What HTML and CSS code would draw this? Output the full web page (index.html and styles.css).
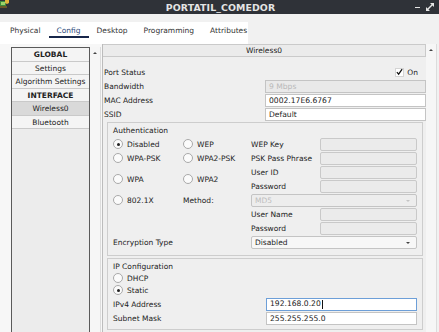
FILE: index.html
```html
<!DOCTYPE html>
<html lang="en">
<head>
    <meta charset="UTF-8">
    <meta name="viewport" content="width=device-width, initial-scale=1.0">
    <title>PORTATIL_COMEDOR</title>
    <link rel="stylesheet" href="styles.css">
</head>
<body>
    <div class="titlebar">
        <svg class="app-icon" width="9" height="9" viewBox="0 0 9 9">
            <rect x="0" y="1" width="6" height="5" fill="#3d8b3d"/>
            <rect x="1" y="2" width="4" height="3" fill="#9bd36a"/>
            <path d="M5 0 L9 0 L9 3 L7 4 L5 3 Z" fill="#e0b53a"/>
            <rect x="0" y="6" width="7" height="2" fill="#6b5a2a"/>
        </svg>
        <div class="title">PORTATIL_COMEDOR</div>
        <div class="win-controls">
            <span class="minimize"></span>
            <svg width="8" height="8" viewBox="0 0 8 8">
                <path d="M4 0 H8 V4 L6.5 2.5 L2.5 6.5 L4 8 H0 V4 L1.5 5.5 L5.5 1.5 Z" fill="#e6e6e6"/>
            </svg>
        </div>
    </div>
    <div class="tabbar">
        <div class="tabs">
            <span class="tab">Physical</span>
            <span class="tab active">Config</span>
            <span class="tab">Desktop</span>
            <span class="tab">Programming</span>
            <span class="tab">Attributes</span>
        </div>
    </div>
    <div class="main">
        <div class="sidebar">
            <div class="side-list">
                <div class="side-item heading">GLOBAL</div>
                <div class="side-item">Settings</div>
                <div class="side-item">Algorithm Settings</div>
                <div class="side-item heading">INTERFACE</div>
                <div class="side-item selected">Wireless0</div>
                <div class="side-item">Bluetooth</div>
            </div>
            <div class="scrollbar"><span class="arrow-up"></span></div>
        </div>
        <div class="content">
            <div class="panel">
                <div class="panel-header">Wireless0</div>
                <div class="panel-body">
                    <div class="form-row">
                        <span class="label">Port Status</span>
                        <span class="port-on">
                            <span class="checkbox">
                                <svg width="8" height="8" viewBox="0 0 8 8"><path d="M1 4.2 L3 6.5 L7 0.8" stroke="#111" stroke-width="1.4" fill="none"/></svg>
                            </span>
                            On
                        </span>
                    </div>
                    <div class="form-row">
                        <span class="label">Bandwidth</span>
                        <span class="field disabled">9 Mbps</span>
                    </div>
                    <div class="form-row">
                        <span class="label">MAC Address</span>
                        <span class="field">0002.17E6.6767</span>
                    </div>
                    <div class="form-row">
                        <span class="label">SSID</span>
                        <span class="field">Default</span>
                    </div>

                    <div class="group auth">
                        <div class="group-title">Authentication</div>
                        <div class="auth-grid">
                            <span class="radio-opt r1 c1"><span class="radio checked"></span>Disabled</span>
                            <span class="radio-opt r1 c2"><span class="radio"></span>WEP</span>
                            <span class="label r1 c3">WEP Key</span>
                            <span class="small-field r1 c4"></span>

                            <span class="radio-opt r2 c1"><span class="radio"></span>WPA-PSK</span>
                            <span class="radio-opt r2 c2"><span class="radio"></span>WPA2-PSK</span>
                            <span class="label r2 c3">PSK Pass Phrase</span>
                            <span class="small-field r2 c4"></span>

                            <span class="radio-opt r34 c1"><span class="radio"></span>WPA</span>
                            <span class="radio-opt r34 c2"><span class="radio"></span>WPA2</span>
                            <span class="label r3 c3">User ID</span>
                            <span class="small-field r3 c4"></span>
                            <span class="label r4 c3">Password</span>
                            <span class="small-field r4 c4"></span>

                            <span class="radio-opt r5 c1"><span class="radio"></span>802.1X</span>
                            <span class="label r5 c2">Method:</span>
                            <span class="select disabled r5 c34">MD5<span class="caret"></span></span>

                            <span class="label r6 c3">User Name</span>
                            <span class="small-field r6 c4"></span>
                            <span class="label r7 c3">Password</span>
                            <span class="small-field r7 c4"></span>

                            <span class="label r8 c12">Encryption Type</span>
                            <span class="select r8 c34">Disabled<span class="caret"></span></span>
                        </div>
                    </div>

                    <div class="group ipconf">
                        <div class="group-title">IP Configuration</div>
                        <div class="ip-opt"><span class="radio"></span>DHCP</div>
                        <div class="ip-opt"><span class="radio checked"></span>Static</div>
                        <div class="ip-row first">
                            <span class="label">IPv4 Address</span>
                            <span class="field focused">192.168.0.20<span class="cursor"></span></span>
                        </div>
                        <div class="ip-row">
                            <span class="label">Subnet Mask</span>
                            <span class="field">255.255.255.0</span>
                        </div>
                    </div>
                </div>
            </div>
            <div class="scrollbar"><span class="arrow-up"></span></div>
        </div>
    </div>
</body>
</html>
```

FILE: styles.css
```css
html, body {
    margin: 0;
    height: 100%;
    overflow: hidden;
}
body {
    font-family: 'DejaVu Sans', 'Noto Sans', sans-serif;
    font-size: 7.5px;
    color: #222;
    background: #f1f1f1;
}
.titlebar {
    height: 14px;
    background: #2f3238;
    display: flex;
    align-items: center;
    position: relative;
}
.app-icon {
    position: absolute;
    left: 0;
    top: 0;
}
.title {
    flex: 1;
    text-align: center;
    color: #e4e4e4;
    font-weight: bold;
    font-size: 9.4px;
    letter-spacing: 0.1px;
    padding-left: 2px;
}
.win-controls {
    position: absolute;
    right: 5px;
    top: 3px;
    display: flex;
    align-items: center;
    gap: 6px;
}
.minimize {
    width: 5px;
    height: 1px;
    background: #e6e6e6;
}
.tabbar {
    margin-top: 8px;
    height: 22px;
}
.tabs {
    width: 248px;
    height: 22px;
    background: #fff;
    display: flex;
    padding-left: 2px;
    box-sizing: border-box;
}
.tab {
    padding: 0 8px;
    height: 16px;
    line-height: 18px;
    color: #333;
}
.tab.active {
    color: #2d4b7c;
    box-shadow: inset 0 -2px 0 #17264a;
}
.main {
    display: flex;
    height: 288px;
}
.sidebar {
    width: 103px;
    display: flex;
    padding-left: 11px;
    padding-top: 3px;
    box-sizing: border-box;
    background: #f7f7f7;
}
.side-list {
    width: 79px;
    border: 1px solid #5a5a5a;
    border-bottom: none;
    background: #ececec;
    box-sizing: border-box;
}
.side-item {
    height: 13.5px;
    line-height: 13px;
    text-align: center;
    background: #f4f4f4;
    border-bottom: 1px solid #c9c9c9;
    box-sizing: border-box;
}
.side-item.heading {
    font-weight: bold;
}
.side-item.selected {
    background: #d9d9d9;
}
.scrollbar {
    width: 10px;
    background: #f6f6f6;
    border-right: 1px solid #dcdcdc;
    position: relative;
}
.arrow-up {
    position: absolute;
    left: 3px;
    top: 5px;
    border-left: 2px solid transparent;
    border-right: 2px solid transparent;
    border-bottom: 2px solid #444;
}
.content {
    flex: 1;
    display: flex;
    padding-right: 2px;
}
.panel {
    width: 323px;
    border-left: 1px solid #bcbcbc;
    background: #efefef;
}
.panel-header {
    height: 11px;
    line-height: 11px;
    text-align: center;
    background: #ebebeb;
    border: 1px solid #cacaca;
    border-left: none;
}
.panel-body {
    padding: 8px 0 0 1px;
}
.form-row {
    display: grid;
    grid-template-columns: 161px 161px;
    height: 14px;
    align-items: center;
}
.field {
    height: 13px;
    line-height: 12px;
    box-sizing: border-box;
    background: #fff;
    border: 1px solid #c4c4c4;
    padding-left: 3px;
    font-size: 7.6px;
}
.field.disabled {
    background: #e9e9e9;
    color: #b9b9b9;
}
.field.focused {
    border-color: #6d9fd8;
    display: flex;
    align-items: center;
}
.cursor {
    width: 1px;
    height: 9px;
    background: #111;
    margin-left: 1px;
}
.port-on {
    display: flex;
    justify-content: flex-end;
    align-items: center;
    gap: 3px;
    padding-right: 8px;
}
.checkbox {
    width: 9px;
    height: 9px;
    box-sizing: border-box;
    border: 1px solid #d4d4d4;
    background: #fff;
    display: flex;
    align-items: center;
    justify-content: center;
}
.group {
    margin: 1px 3px 0 3px;
    border: 1px solid #cdcdcd;
    width: 316px;
    box-sizing: border-box;
    padding: 3px 5px 0 5px;
}
.group-title {
    height: 11px;
    line-height: 10px;
}
.auth {
    height: 134px;
}
.auth-grid {
    display: grid;
    grid-template-columns: 70px 68px 69px 97px;
    grid-template-rows: repeat(8, 14px);
    align-items: center;
}
.r1 { grid-row: 1; }
.r2 { grid-row: 2; }
.r3 { grid-row: 3; }
.r4 { grid-row: 4; }
.r34 { grid-row: 3 / 5; }
.r5 { grid-row: 5; }
.r6 { grid-row: 6; }
.r7 { grid-row: 7; }
.r8 { grid-row: 8; }
.c1 { grid-column: 1; }
.c2 { grid-column: 2; }
.c3 { grid-column: 3; }
.c4 { grid-column: 4; }
.c12 { grid-column: 1 / 3; }
.c34 { grid-column: 3 / 5; }
.radio-opt, .ip-opt {
    display: flex;
    align-items: center;
    gap: 4px;
}
.radio {
    width: 10px;
    height: 10px;
    box-sizing: border-box;
    border-radius: 50%;
    border: 1px solid #a9a9a9;
    background: #fbfbfb;
    position: relative;
}
.radio.checked::after {
    content: '';
    position: absolute;
    left: 2.5px;
    top: 2.5px;
    width: 3px;
    height: 3px;
    border-radius: 50%;
    background: #222;
}
.small-field {
    height: 13px;
    box-sizing: border-box;
    background: #ebebeb;
    border: 1px solid #c9c9c9;
    border-radius: 2px;
}
.select {
    height: 13px;
    line-height: 11px;
    box-sizing: border-box;
    border: 1px solid #c4c4c4;
    border-radius: 2px;
    background: #f7f7f7;
    padding-left: 3px;
    position: relative;
}
.select.disabled {
    color: #bdbdbd;
    background: #ededed;
}
.caret {
    position: absolute;
    right: 6px;
    top: 5px;
    border-left: 2px solid transparent;
    border-right: 2px solid transparent;
    border-top: 2px solid #444;
}
.select.disabled .caret {
    border-top-color: #c4c4c4;
}
.ipconf {
    margin-top: 2px;
    height: 72px;
}
.ipconf .group-title {
    height: 10px;
}
.ip-opt {
    height: 12px;
}
.ip-row {
    display: grid;
    grid-template-columns: 153px 151px;
    height: 14px;
    align-items: center;
}
.ip-row.first {
    margin-top: 1px;
}
```
